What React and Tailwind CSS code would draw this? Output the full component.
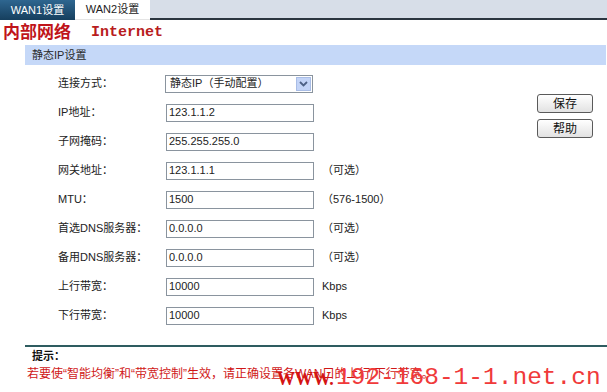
import React from "react";

const FONT = { fontFamily: '"Liberation Sans", "Noto Sans CJK SC", sans-serif' };

const rows = [
  { label: "IP地址：", value: "123.1.1.2" },
  { label: "子网掩码：", value: "255.255.255.0" },
  { label: "网关地址：", value: "123.1.1.1", note: "（可选）" },
  { label: "MTU：", value: "1500", note: "（576-1500）" },
  { label: "首选DNS服务器：", value: "0.0.0.0", note: "（可选）" },
  { label: "备用DNS服务器：", value: "0.0.0.0", note: "（可选）" },
  { label: "上行带宽：", value: "10000", note: "Kbps" },
  { label: "下行带宽：", value: "10000", note: "Kbps" },
];

const Field = ({ children }) => (
  <div className="w-[148px] h-[18px] border border-[#8a949e] bg-white flex items-center pl-[2px] text-[11px] text-[#222]">
    {children}
  </div>
);

const Btn = ({ children }) => (
  <button className="w-[56px] h-[19px] rounded-[3px] border border-[#5a5a5a] bg-gradient-to-b from-white to-[#e2e2e2] text-[12px] leading-none text-[#111] flex items-center justify-center">
    {children}
  </button>
);

export default function App() {
  return (
    <div className="w-[607px] h-[392px] bg-white relative overflow-hidden text-[11px] text-[#222]" style={FONT}>
      {/* tabs */}
      <div className="flex h-[20px] bg-[#d7dee8]">
        <div className="w-[75px] h-[20px] bg-gradient-to-b from-[#2e6690] to-[#163f5e] text-white flex items-center justify-center">
          WAN1设置
        </div>
        <div className="w-[75px] h-[20px] bg-white text-[#222] flex items-center justify-center border-b border-[#e4e4e4]">
          WAN2设置
        </div>
        <div className="flex-1 border-b-2 border-[#2b3640]" />
      </div>

      {/* watermark row */}
      <div className="h-[25px] flex items-center">
        <span className="ml-[3px] text-[17px] font-bold text-[#c0141a] leading-none">内部网络</span>
        <span
          className="ml-[20px] text-[15px] font-bold text-[#b81c20] leading-none"
          style={{ fontFamily: '"Liberation Mono", monospace' }}
        >
          Internet
        </span>
      </div>

      <div className="pl-[25px]">
        <div className="h-[20px] bg-[#c5d8f8] flex items-center pl-[7px] mr-[1px] text-[#2a2a2a]">
          静态IP设置
        </div>

        <div className="flex">
          <div className="pl-[33px] pt-[4px]">
            <div className="h-[29px] flex items-center">
              <div className="w-[107px]">连接方式：</div>
              <div className="w-[148px] h-[18px] border border-[#8a949e] bg-white flex items-center justify-between pl-[4px] pr-[1px]">
                <span>静态IP（手动配置）</span>
                <span className="w-[15px] h-[14px] bg-[#c3d4f7] border border-[#a9bde6] flex items-center justify-center">
                  <svg width="9" height="6" viewBox="0 0 9 6">
                    <path d="M1 1 L4.5 4.5 L8 1" fill="none" stroke="#4d6185" strokeWidth="1.8" />
                  </svg>
                </span>
              </div>
            </div>
            {rows.map((r) => (
              <div key={r.label} className="h-[29px] flex items-center">
                <div className="w-[108px]">{r.label}</div>
                <Field>{r.value}</Field>
                {r.note && <div className="ml-[8px]">{r.note}</div>}
              </div>
            ))}
          </div>

          <div className="ml-auto mr-[14px] mt-[29px] flex flex-col gap-[6px]">
            <Btn>保存</Btn>
            <Btn>帮助</Btn>
          </div>
        </div>

        <div className="mt-[15px] border-t-2 border-[#2e5c60]">
          <div className="pt-[1px] pl-[7px] leading-[16px] font-bold text-[#111]">提示：</div>
          <div className="pl-[2px] leading-[20px] text-[12px] text-[#d01818]">
            若要使“智能均衡”和“带宽控制”生效，请正确设置各WAN口的上行/下行带宽。
          </div>
        </div>
      </div>

      {/* site watermark */}
      <div
        className="absolute left-[277px] top-[370px] text-[18px] font-bold leading-none text-[#d41414]"
        style={{ fontFamily: '"Liberation Serif", serif' }}
      >
        WWW.
      </div>
      <div
        className="absolute left-[336px] top-[366px] text-[24.5px] leading-none text-[#f03a3a]"
        style={{ fontFamily: '"Liberation Mono", monospace' }}
      >
        192-168-1-1.net.cn
      </div>
    </div>
  );
}
